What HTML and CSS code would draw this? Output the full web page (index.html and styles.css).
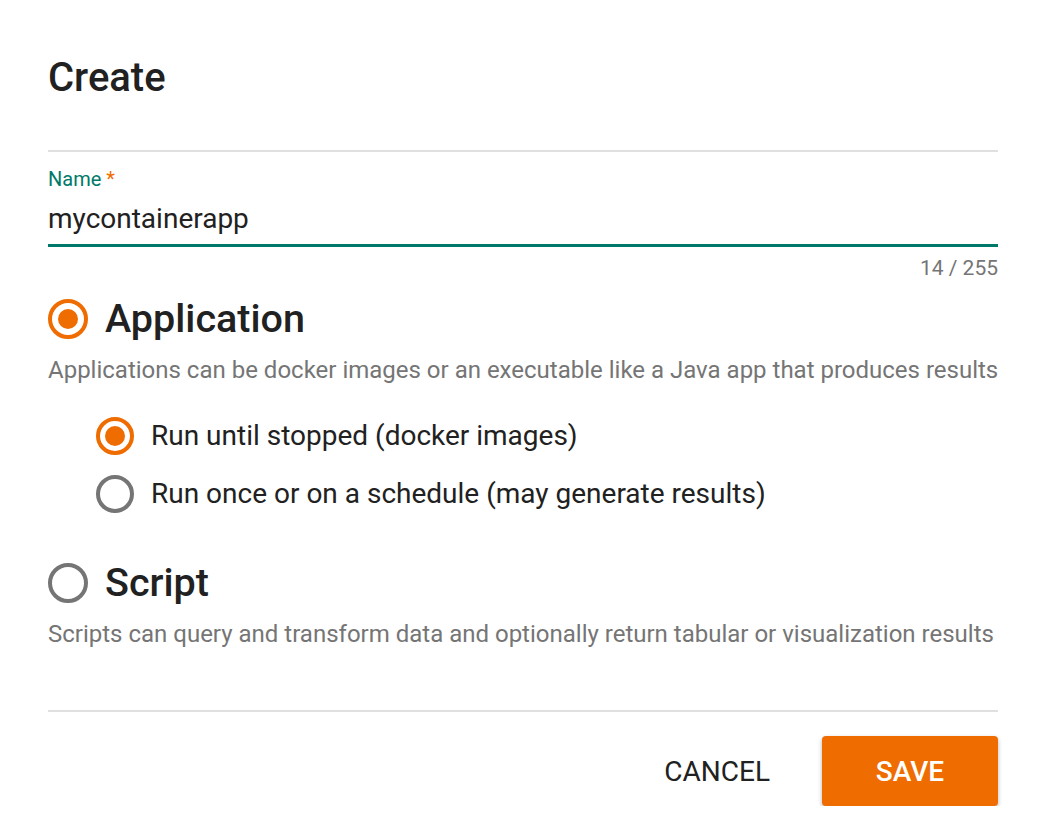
FILE: index.html
```html
<!DOCTYPE html>
<html>
<head>
<meta charset="utf-8">
<link rel="stylesheet" href="styles.css">
</head>
<body>
<div class="dialog">
  <h1 class="title">Create</h1>
  <div class="divider top"></div>
  <div class="field">
    <label class="label">Name <span class="req">*</span></label>
    <div class="input">mycontainerapp</div>
    <div class="counter">14 / 255</div>
  </div>
  <div class="option">
    <div class="main-radio">
      <span class="radio big checked"><span class="dot"></span></span>
      <span class="main-label">Application</span>
    </div>
    <p class="desc">Applications can be docker images or an executable like a Java app that produces results</p>
    <div class="sub-options">
      <div class="sub-radio">
        <span class="radio checked"><span class="dot"></span></span>
        <span class="sub-label">Run until stopped (docker images)</span>
      </div>
      <div class="sub-radio">
        <span class="radio"></span>
        <span class="sub-label">Run once or on a schedule (may generate results)</span>
      </div>
    </div>
  </div>
  <div class="option script">
    <div class="main-radio">
      <span class="radio big"></span>
      <span class="main-label">Script</span>
    </div>
    <p class="desc">Scripts can query and transform data and optionally return tabular or visualization results</p>
  </div>
  <div class="divider bottom"></div>
  <div class="actions">
    <button class="btn cancel">CANCEL</button>
    <button class="btn save">SAVE</button>
  </div>
</div>
</body>
</html>
```

FILE: styles.css
```css
html, body {
  margin: 0;
  padding: 0;
  background: #ffffff;
}
body {
  font-family: Roboto, "Liberation Sans", Arial, sans-serif;
  color: #212121;
}
.dialog {
  width: 950px;
  padding: 54px 44px 0 48px;
}
.title {
  margin: 0;
  font-size: 40px;
  line-height: 48px;
  font-weight: 500;
  color: #212121;
}
.divider {
  height: 2px;
  background: #e0e0e0;
}
.divider.top {
  margin-top: 48px;
}
.field {
  margin-top: 15px;
}
.label {
  display: block;
  font-size: 20px;
  line-height: 24px;
  color: #00796b;
}
.req {
  color: #ef6c00;
}
.input {
  margin-top: 10px;
  font-size: 28px;
  line-height: 36px;
  color: #212121;
  padding-bottom: 7px;
  border-bottom: 3px solid #00796b;
}
.counter {
  margin-top: 9px;
  text-align: right;
  font-size: 21px;
  line-height: 24px;
  color: #757575;
}
.option {
  margin-top: 19px;
}
.main-radio {
  display: flex;
  align-items: center;
  gap: 17px;
  height: 40px;
}
.radio {
  box-sizing: border-box;
  width: 38px;
  height: 38px;
  border-radius: 50%;
  border: 4px solid #757575;
  display: flex;
  align-items: center;
  justify-content: center;
  flex: none;
}
.radio.big {
  width: 40px;
  height: 40px;
}
.radio.checked {
  border-color: #ef6c00;
}
.dot {
  width: 20px;
  height: 20px;
  border-radius: 50%;
  background: #ef6c00;
}
.main-label {
  font-size: 39.5px;
  line-height: 48px;
  font-weight: 500;
  color: #212121;
}
.desc {
  margin: 15px 0 0 0;
  font-size: 24px;
  line-height: 32px;
  color: #757575;
  white-space: nowrap;
}
.sub-options {
  margin-top: 31px;
  padding-left: 48px;
  display: flex;
  flex-direction: column;
  gap: 20px;
}
.sub-radio {
  display: flex;
  align-items: center;
  gap: 17px;
  height: 38px;
}
.sub-label {
  font-size: 28px;
  line-height: 34px;
  color: #212121;
}
.option.script {
  margin-top: 50px;
}
.divider.bottom {
  margin-top: 60px;
}
.actions {
  margin-top: 24px;
  display: flex;
  justify-content: flex-end;
  align-items: center;
  gap: 52px;
}
.btn {
  font-family: Roboto, "Liberation Sans", Arial, sans-serif;
  font-size: 28px;
  border: none;
  background: none;
  padding: 0;
  cursor: pointer;
}
.cancel {
  color: #212121;
}
.save {
  width: 176px;
  height: 70px;
  background: #ef6c00;
  color: #ffffff;
  font-weight: 500;
  border-radius: 4px;
  box-shadow: 0 2px 4px rgba(0,0,0,0.3);
}
```
